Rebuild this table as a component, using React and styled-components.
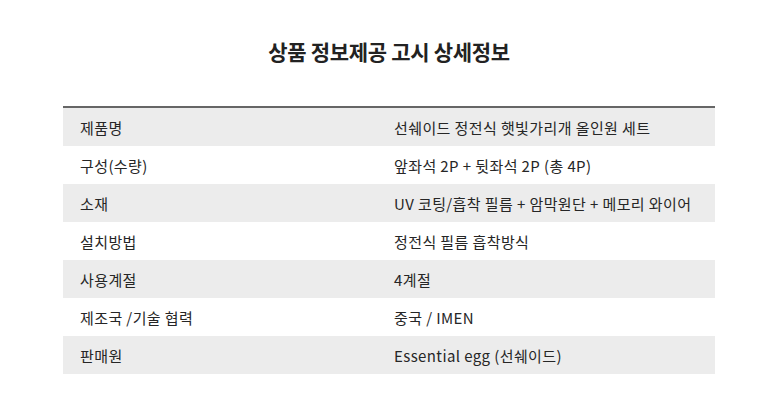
import React from "react";
import styled, { createGlobalStyle } from "styled-components";

const GlobalStyle = createGlobalStyle`
  body {
    margin: 0;
    background: #fff;
    font-family: "Noto Sans CJK KR", "Noto Sans", sans-serif;
  }
`;

const Page = styled.div`
  width: 652px;
  margin: 0 auto;
  padding-top: 36px;
`;

const Title = styled.h2`
  margin: 0 0 40px;
  text-align: center;
  font-size: 21px;
  line-height: 30px;
  font-weight: 700;
  letter-spacing: -0.3px;
  color: #222;
`;

const Table = styled.div`
  border-top: 2px solid #666;
`;

const Row = styled.div`
  display: grid;
  grid-template-columns: 314px 1fr;
  align-items: center;
  height: 38px;
  padding-left: 17px;
  background: ${(p) => (p.$shade ? "#ececec" : "#fff")};
`;

const Cell = styled.div`
  font-size: 15px;
  letter-spacing: 0.4px;
  color: #262626;
  white-space: nowrap;
`;

const rows = [
  ["제품명", "선쉐이드 정전식 햇빛가리개 올인원 세트"],
  ["구성(수량)", "앞좌석 2P + 뒷좌석 2P (총 4P)"],
  ["소재", "UV 코팅/흡착 필름 + 암막원단 + 메모리 와이어"],
  ["설치방법", "정전식 필름 흡착방식"],
  ["사용계절", "4계절"],
  ["제조국 /기술 협력", "중국 / IMEN"],
  ["판매원", "Essential egg (선쉐이드)"],
];

export default function App() {
  return (
    <>
      <GlobalStyle />
      <Page>
        <Title>상품 정보제공 고시 상세정보</Title>
        <Table>
          {rows.map(([label, value], i) => (
            <Row key={label} $shade={i % 2 === 0}>
              <Cell>{label}</Cell>
              <Cell>{value}</Cell>
            </Row>
          ))}
        </Table>
      </Page>
    </>
  );
}
